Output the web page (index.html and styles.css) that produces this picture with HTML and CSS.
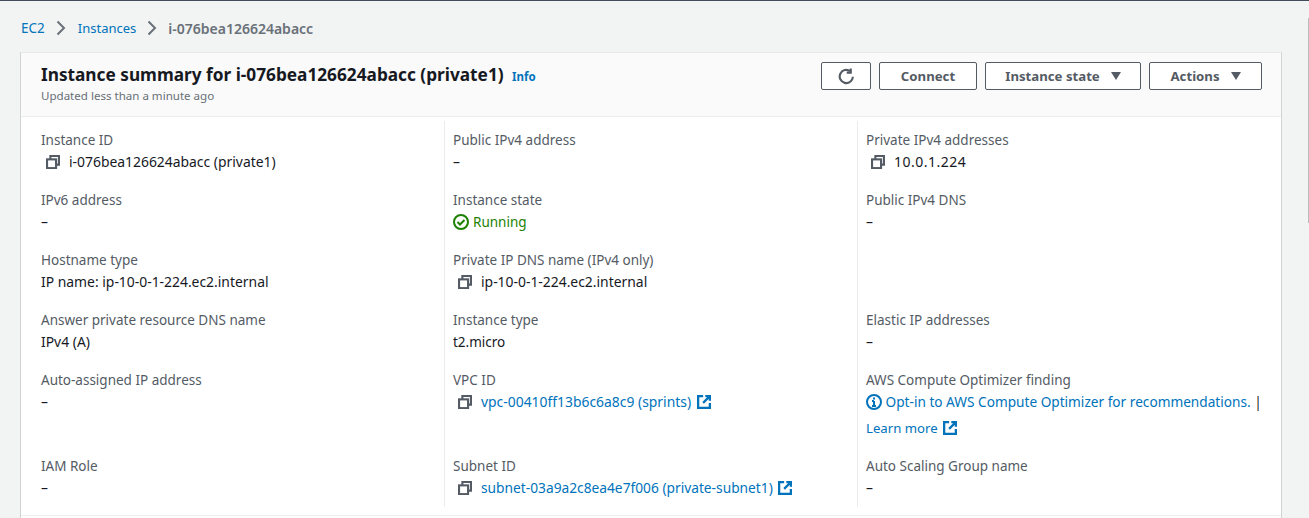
FILE: index.html
```html
<!DOCTYPE html>
<html lang="en">
<head>
    <meta charset="UTF-8">
    <title>Instance summary</title>
    <link rel="stylesheet" href="styles.css">
</head>
<body>

    <svg class="icon-defs" width="0" height="0">
        <symbol id="copy" viewBox="0 0 16 16">
            <path d="M5 4.500V1.200h9.800V11h-3" fill="none" stroke="currentColor" stroke-width="2.400"/>
            <rect x="1.200" y="5" width="10.300" height="10" fill="none" stroke="currentColor" stroke-width="2.400"/>
        </symbol>
        <symbol id="external" viewBox="0 0 16 16">
            <path d="M7 1.300H1.300v13.400h13.400V9" fill="none" stroke="currentColor" stroke-width="2.600"/>
            <path d="M9.500 1.300h5.200v5.200M14.500 1.500L7 9" fill="none" stroke="currentColor" stroke-width="2.600"/>
        </symbol>
    </svg>

    <!-- Breadcrumbs -->
    <nav class="breadcrumbs">
        <a class="crumb-root" href="#">EC2</a>
        <svg class="crumb-sep" viewBox="0 0 16 16"><path d="M4.500 1.500L11 8l-6.500 6.500" fill="none" stroke="currentColor" stroke-width="2"/></svg>
        <a href="#">Instances</a>
        <svg class="crumb-sep" viewBox="0 0 16 16"><path d="M4.500 1.500L11 8l-6.500 6.500" fill="none" stroke="currentColor" stroke-width="2"/></svg>
        <span class="crumb-current">i-076bea126624abacc</span>
    </nav>

    <div class="card">

        <div class="card-header">
            <div class="title-block">
                <h1>Instance summary for i-076bea126624abacc (private1) <a class="info" href="#">Info</a></h1>
                <p class="updated">Updated less than a minute ago</p>
            </div>
            <div class="actions">
                <button class="btn btn-icon" type="button">
                    <svg viewBox="0 0 16 16" width="17" height="17"><path d="M14 8.200A6.200 6.200 0 1 1 11.500 3" fill="none" stroke="currentColor" stroke-width="2"/><path d="M12 0.500v3.800H8.200" fill="none" stroke="currentColor" stroke-width="2"/></svg>
                </button>
                <button class="btn btn-connect" type="button">Connect</button>
                <button class="btn btn-state" type="button">Instance state <span class="caret"></span></button>
                <button class="btn btn-actions" type="button">Actions <span class="caret"></span></button>
            </div>
        </div>

        <div class="details">

            <div class="cell">
                <div class="label">Instance ID</div>
                <div class="value copyable"><svg class="copy"><use href="#copy"/></svg>i-076bea126624abacc (private1)</div>
            </div>
            <div class="cell">
                <div class="label">Public IPv4 address</div>
                <div class="value">–</div>
            </div>
            <div class="cell">
                <div class="label">Private IPv4 addresses</div>
                <div class="value copyable"><svg class="copy"><use href="#copy"/></svg><span class="ip">10.0.1.224</span></div>
            </div>

            <div class="cell">
                <div class="label">IPv6 address</div>
                <div class="value">–</div>
            </div>
            <div class="cell">
                <div class="label">Instance state</div>
                <div class="value running">
                    <svg viewBox="0 0 16 16" width="16" height="16"><circle cx="8" cy="8" r="7" fill="none" stroke="currentColor" stroke-width="2"/><path d="M4.500 8l2.500 2.500 4.500-4.500" fill="none" stroke="currentColor" stroke-width="2"/></svg>
                    Running
                </div>
            </div>
            <div class="cell">
                <div class="label">Public IPv4 DNS</div>
                <div class="value">–</div>
            </div>

            <div class="cell">
                <div class="label">Hostname type</div>
                <div class="value">IP name: ip-10-0-1-224.ec2.internal</div>
            </div>
            <div class="cell">
                <div class="label">Private IP DNS name (IPv4 only)</div>
                <div class="value copyable"><svg class="copy"><use href="#copy"/></svg>ip-10-0-1-224.ec2.internal</div>
            </div>
            <div class="cell"></div>

            <div class="cell">
                <div class="label">Answer private resource DNS name</div>
                <div class="value">IPv4 (A)</div>
            </div>
            <div class="cell">
                <div class="label">Instance type</div>
                <div class="value short">t2.micro</div>
            </div>
            <div class="cell">
                <div class="label">Elastic IP addresses</div>
                <div class="value">–</div>
            </div>

            <div class="cell">
                <div class="label">Auto-assigned IP address</div>
                <div class="value">–</div>
            </div>
            <div class="cell">
                <div class="label">VPC ID</div>
                <div class="value copyable link">
                    <svg class="copy"><use href="#copy"/></svg>vpc-00410ff13b6c6a8c9 (sprints)
                    <svg class="external"><use href="#external"/></svg>
                </div>
            </div>
            <div class="cell">
                <div class="label">AWS Compute Optimizer finding</div>
                <div class="value link finding">
                    <svg viewBox="0 0 16 16" width="16" height="16"><circle cx="8" cy="8" r="7" fill="none" stroke="currentColor" stroke-width="2"/><path d="M8 7v5M6 12h4M6 7h2" fill="none" stroke="currentColor" stroke-width="2"/><rect x="7" y="3.500" width="2" height="2" fill="currentColor"/></svg>
                    Opt-in to AWS Compute Optimizer for recommendations. <span class="pipe">|</span>
                </div>
                <div class="value link learn">Learn more <svg class="external"><use href="#external"/></svg></div>
            </div>

            <div class="cell">
                <div class="label">IAM Role</div>
                <div class="value">–</div>
            </div>
            <div class="cell">
                <div class="label">Subnet ID</div>
                <div class="value copyable link subnet">
                    <svg class="copy"><use href="#copy"/></svg>subnet-03a9a2c8ea4e7f006 (private-subnet1)
                    <svg class="external"><use href="#external"/></svg>
                </div>
            </div>
            <div class="cell">
                <div class="label">Auto Scaling Group name</div>
                <div class="value">–</div>
            </div>

        </div>
    </div>

    <div class="scroll-thumb"></div>

</body>
</html>
```

FILE: styles.css
```css
html, body {
    height: 100%;
}

body {
    margin: 0;
    overflow: hidden;
    background: #f2f3f3;
    border-top: 1px solid #414d5c;
    box-sizing: border-box;
    font-family: "Noto Sans", Roboto, sans-serif;
    font-size: 13px;
    color: #16191f;
    position: relative;
}

a {
    color: #0073bb;
    text-decoration: none;
}

.icon-defs {
    position: absolute;
}

.breadcrumbs {
    display: flex;
    align-items: center;
    height: 20px;
    padding: 17px 0 14px 21px;
    font-size: 13px;
}

.crumb-root {
    font-size: 13.5px;
}

.crumb-sep {
    width: 16px;
    height: 16px;
    margin: 0 8px;
    color: #687078;
}

.crumb-root + .crumb-sep {
    margin-right: 9px;
}

.crumb-current {
    color: #687078;
    font-size: 14px;
    font-weight: 600;
}

.card {
    margin-left: 20px;
    width: 1262px;
    padding-bottom: 20px;
    background: #fff;
    border-top: 1px solid #e6e9e9;
    border-left: 1px solid #cfd3d3;
    border-right: 1px solid #cfd3d3;
    box-sizing: border-box;
}

.card-header {
    display: flex;
    justify-content: space-between;
    height: 64px;
    padding: 9px 19px 0 20px;
    box-sizing: border-box;
    background: #fafafa;
    border-bottom: 1px solid #eaeded;
}

.title-block {
    padding-top: 1px;
}

h1 {
    margin: 0;
    font-size: 17.24px;
    line-height: 24px;
    font-weight: 700;
}

.info {
    margin-left: 4px;
    font-size: 11.5px;
    font-weight: 700;
}

.updated {
    margin: -2px 0 0;
    font-size: 11.55px;
    line-height: 18px;
    color: #687078;
}

.actions {
    display: flex;
    gap: 8px;
}

.btn {
    height: 28px;
    box-sizing: border-box;
    margin: 0;
    padding: 0;
    background: #fff;
    border: 1px solid #545b64;
    border-radius: 2px;
    color: #545b64;
    font-family: inherit;
    font-size: 13.2px;
    font-weight: 700;
    display: flex;
    align-items: center;
    justify-content: center;
}

.btn-icon { width: 50px; }
.btn-connect { width: 98px; }
.btn-state { width: 156px; }
.btn-actions { width: 113px; }

.caret {
    display: inline-block;
    margin-left: 11px;
    border-left: 5.5px solid transparent;
    border-right: 5.5px solid transparent;
    border-top: 8px solid #545b64;
}

.details {
    display: grid;
    grid-template-columns: 423px 413px 1fr;
    margin-top: 4px;
    padding-bottom: 8px;
    border-bottom: 1px solid #eaeded;
}

.cell {
    padding: 9px 0 8px 8px;
    border-left: 1px solid #eaeded;
}

.cell:nth-child(3n+1) {
    border-left: none;
    padding-left: 20px;
}

.label {
    font-size: 13.5px;
    line-height: 20px;
    color: #545b64;
}

.value {
    font-size: 13.9px;
    line-height: 22px;
    margin-top: 1px;
    white-space: nowrap;
}

.short,
.running {
    font-size: 13.5px;
}

.subnet {
    font-size: 13.75px;
}

.finding {
    font-size: 13.65px;
}

.learn {
    font-size: 13.2px;
    margin-top: 4px;
}

.ip {
    font-size: 14px;
    letter-spacing: 0.5px;
}

.copyable svg.copy {
    width: 14px;
    height: 14px;
    margin: 0 9px 0 5px;
    color: #545b64;
    vertical-align: -2px;
}

.link {
    color: #0073bb;
}

.external {
    width: 14px;
    height: 14px;
    margin-left: 2px;
    vertical-align: -2px;
    color: #0073bb;
}

.running {
    color: #1d8102;
    display: flex;
    align-items: center;
    gap: 4px;
}

.finding svg {
    vertical-align: -3px;
}

.pipe {
    color: #16191f;
}

.scroll-thumb {
    position: absolute;
    right: 0;
    top: 17px;
    width: 1px;
    height: 205px;
    background: #bbb;
}
```
